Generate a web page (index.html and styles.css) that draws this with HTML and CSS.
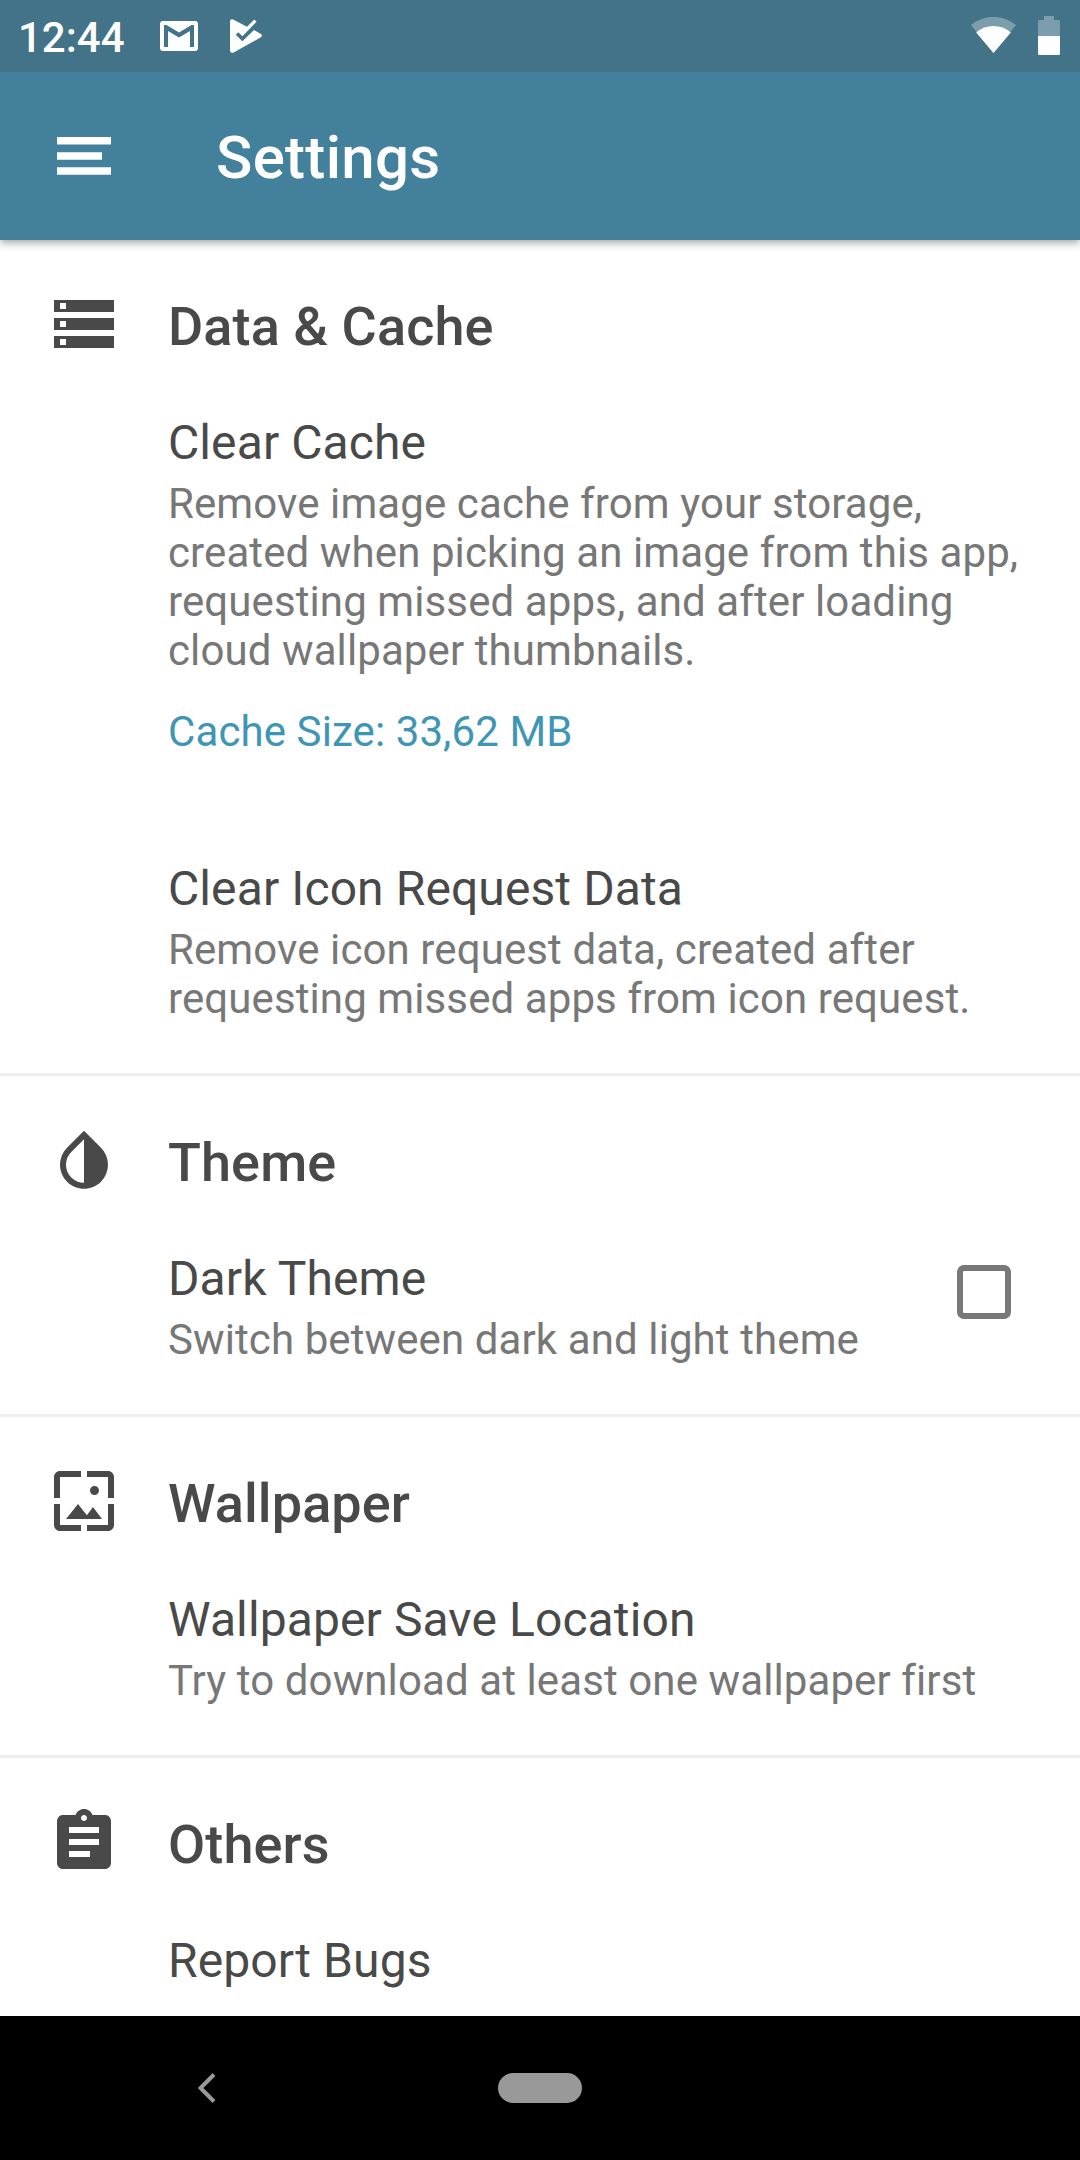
FILE: index.html
```html
<!doctype html>
<html>
<head>
	<meta charset="utf-8">
	<title>Settings</title>
	<link rel="stylesheet" href="styles.css">
</head>
<body>
	<div id="statusbar">
		<span class="time">12:44</span>
		<svg class="mail" viewBox="0 0 38 30">
			<path fill-rule="evenodd" d="M3 0h32a3 3 0 0 1 3 3v24a3 3 0 0 1-3 3H3a3 3 0 0 1-3-3V3a3 3 0 0 1 3-3zM4 4v22h4V10l11 6.500L30 10v16h4V4h-2.500L19 11.500 6.500 4z"/>
		</svg>
		<svg class="play" viewBox="0 0 32 34">
			<path d="M3.200.4L17 7.700l7.300-7.300 2.200 2.400L12.400 17.300l-4.100-4-2.500 2.400 6.600 6.600L24 11l6.900 4.100q2 1.500 0 3.200L3.200 33.700Q0 34.500 0 31.500v-29Q0-.6 3.200.4z"/>
		</svg>
		<span class="space"></span>
		<svg class="wifi" viewBox="0 0 45 36">
			<path opacity=".3" d="M22.500 36L0 8Q10-.1 22.500-.1T45 8z"/>
			<path d="M22.500 36L5.200 15.500Q13 9.100 22.500 9.100t17.300 6.400z"/>
		</svg>
		<svg class="battery" viewBox="0 0 22 39">
			<path opacity=".3" d="M6 0h10v4h4.500Q22 4 22 5.500V20H0V5.500Q0 4 1.500 4H6z"/>
			<path d="M0 20h22v17.500q0 1.500-1.500 1.500h-19Q0 39 0 37.500z"/>
		</svg>
	</div>

	<div id="toolbar">
		<svg class="menu" viewBox="0 0 54 38">
			<path d="M0 0h54v7.500H0zM0 15.200h45v7.500H0zM0 30.300h54v7.500H0z"/>
		</svg>
		<h1>Settings</h1>
	</div>

	<div id="content">
		<div class="section">
			<div class="head">
				<svg viewBox="0 0 24 24"><path d="M2 20h20v-4H2v4zm2-3h2v2H4v-2zM2 4v4h20V4H2zm4 3H4V5h2v2zm-4 7h20v-4H2v4zm2-3h2v2H4v-2z"/></svg>
				<h2>Data &amp; Cache</h2>
			</div>
			<div class="item">
				<div class="text">
					<h3>Clear Cache</h3>
					<p>Remove image cache from your storage,<br>created when picking an image from this app,<br>requesting missed apps, and after loading<br>cloud wallpaper thumbnails.</p>
					<p class="size">Cache Size: 33,62 MB</p>
				</div>
			</div>
			<div class="item">
				<div class="text">
					<h3>Clear Icon Request Data</h3>
					<p>Remove icon request data, created after<br>requesting missed apps from icon request.</p>
				</div>
			</div>
		</div>

		<div class="section">
			<div class="head">
				<svg viewBox="0 0 24 24"><path d="M17.660 7.930L12 2.270 6.340 7.930c-3.120 3.120-3.120 8.190 0 11.310C7.900 20.800 9.950 21.580 12 21.580c2.050 0 4.100-.78 5.660-2.340 3.120-3.120 3.120-8.190 0-11.310zM12 19.590c-1.600 0-3.110-.62-4.240-1.760C6.620 16.690 6 15.190 6 13.590s.62-3.110 1.760-4.240L12 5.100v14.490z"/></svg>
				<h2>Theme</h2>
			</div>
			<div class="item">
				<div class="text">
					<h3>Dark Theme</h3>
					<p>Switch between dark and light theme</p>
				</div>
				<span class="checkbox"></span>
			</div>
		</div>

		<div class="section">
			<div class="head">
				<svg viewBox="0 0 24 24"><path d="M4 4h7V2H4c-1.100 0-2 .9-2 2v7h2V4zm6 9l-4 5h12l-3-4-2.030 2.710L10 13zm7-4.500c0-.83-.67-1.500-1.500-1.500S14 7.670 14 8.500s.67 1.500 1.500 1.500S17 9.330 17 8.500zM20 2h-7v2h7v7h2V4c0-1.100-.9-2-2-2zm0 18h-7v2h7c1.100 0 2-.9 2-2v-7h-2v7zM4 13H2v7c0 1.100.9 2 2 2h7v-2H4v-7z"/></svg>
				<h2>Wallpaper</h2>
			</div>
			<div class="item">
				<div class="text">
					<h3>Wallpaper Save Location</h3>
					<p>Try to download at least one wallpaper first</p>
				</div>
			</div>
		</div>

		<div class="section">
			<div class="head">
				<svg viewBox="0 0 24 24"><path d="M19 3h-4.180C14.400 1.840 13.300 1 12 1c-1.300 0-2.400.84-2.820 2H5c-1.100 0-2 .9-2 2v14c0 1.100.9 2 2 2h14c1.100 0 2-.9 2-2V5c0-1.100-.9-2-2-2zm-7 0c.55 0 1 .45 1 1s-.45 1-1 1-1-.45-1-1 .45-1 1-1zm2 14H7v-2h7v2zm3-4H7v-2h10v2zm0-4H7V7h10v2z"/></svg>
				<h2>Others</h2>
			</div>
			<div class="item">
				<div class="text">
					<h3>Report Bugs</h3>
				</div>
			</div>
		</div>
	</div>

	<div id="navbar">
		<svg class="back" viewBox="0 0 18 30"><path d="M16 1.500L2.500 15 16 28.500"/></svg>
		<span class="home"></span>
		<span class="blank"></span>
	</div>
</body>
</html>
```
FILE: styles.css
```css
*{margin: 0; padding: 0; box-sizing: border-box;}
body{ width: 1080px; height: 2160px; overflow: hidden; display: flex; flex-direction: column; background: #fff; color: #494949; font-family: Roboto, sans-serif; font-variant-ligatures: none;}
svg { display: block; flex: none; fill: currentColor;}

#statusbar { flex: none; height: 72px; padding: 0 20px 0 18px; display: flex; align-items: flex-start; background: #427388; color: #fff;}
#statusbar .time { width: 142px; padding-top: 13px; font-size: 42px; line-height: 49px; font-weight: 500;}
#statusbar .space { flex: 1;}
#statusbar .mail { width: 38px; height: 30px; margin-top: 21px;}
#statusbar .play { width: 32px; height: 34px; margin: 19px 0 0 32px;}
#statusbar .wifi { width: 45px; height: 36px; margin-top: 17px;}
#statusbar .battery { width: 22px; height: 39px; margin: 16px 0 0 22px;}

#toolbar { flex: none; height: 168px; padding-left: 57px; display: flex; align-items: flex-start; background: #42809c; color: #fff; box-shadow: 0 3px 8px rgba(0,0,0,0.35); clip-path: inset(0 0 -16px 0); z-index: 1;}
#toolbar .menu { width: 54px; height: 38px; margin-top: 65px;}
#toolbar h1 { margin: 50px 0 0 105px; font-size: 60px; line-height: 71px; font-weight: 500; letter-spacing: 0.3px;}

#content { flex: 1; min-height: 0; overflow: hidden;}
.section { border-bottom: 3px solid #eee;}
.head { padding: 48px 48px 0; display: flex; gap: 48px;}
.head svg { width: 72px; height: 72px;}
.head h2 { margin-top: 7px; font-size: 54px; line-height: 63px; font-weight: 500; letter-spacing: 0.1px;}
.item { padding: 55px 0 50px 168px; display: flex; justify-content: space-between;}
.item h3 { font-size: 48px; line-height: 56px; font-weight: 400; letter-spacing: 0.1px;}
.item p { margin-top: 8px; font-size: 42px; line-height: 49px; color: #777; white-space: nowrap; letter-spacing: 0.1px;}
.item .size { margin-top: 32px; color: #3f96b4;}
.checkbox { width: 54px; height: 54px; margin: 14px 69px 0 0; border: 6px solid #787878; border-radius: 7px;}

#navbar { flex: none; height: 144px; padding: 0 198px; display: flex; align-items: center; justify-content: space-between; background: #000; color: #999;}
#navbar .back { width: 18px; height: 30px; fill: none; stroke: currentColor; stroke-width: 4;}
#navbar .home { width: 84px; height: 30px; border-radius: 15px; background: #999;}
#navbar .blank { width: 18px;}
```
